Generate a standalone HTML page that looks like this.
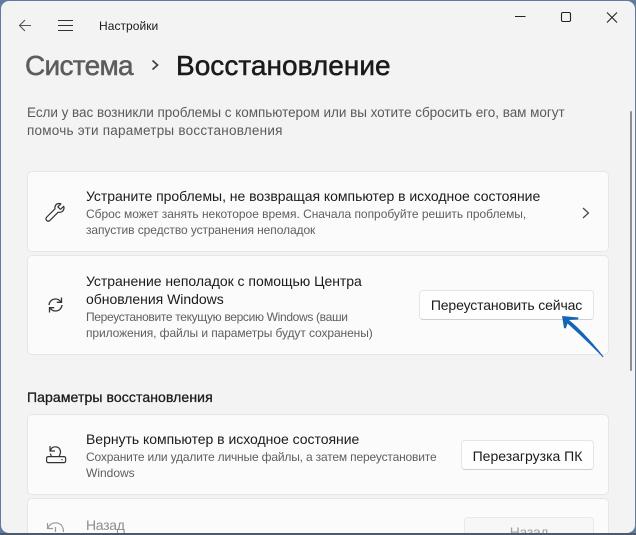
<!DOCTYPE html>
<html lang="ru"><head><meta charset="utf-8"><title>Настройки</title>
<style>
html,body{margin:0;padding:0;width:636px;height:535px;overflow:hidden;background:#5f7c9e}
body{position:relative;font-family:"Liberation Sans",sans-serif}
#bot{position:absolute;left:0;top:533px;width:636px;height:2px;background:#4d5a6e}
#win{position:absolute;left:1px;top:1px;width:634px;height:532px;background:#f3f3f3;border-radius:8px;overflow:hidden}
.t{position:absolute;white-space:nowrap;line-height:18px;color:#1b1b1b;transform-origin:0 50%}
.h{font-size:14px;letter-spacing:-.03px}
.s{font-size:12px;color:#5f5f5f;line-height:16px}
.card{position:absolute;left:26px;width:582px;background:#fbfbfb;border:1px solid #e6e6e6;border-radius:5px;box-sizing:border-box}
.btn{position:absolute;background:#fefefe;border:1px solid #e5e5e5;border-bottom-color:#d0d0d0;border-radius:4px;box-sizing:border-box;font-size:14px;color:#1b1b1b;text-align:center;white-space:nowrap}
svg{position:absolute;overflow:visible}
</style></head><body>
<div id="bot"></div>
<div id="win">
<svg style="left:0;top:0" width="634" height="532" fill="none" stroke="#3a3a3a" stroke-width="1.1">
<path d="M18 24.5H30M18.500 24.500L24 19M18.500 24.500L24 30" stroke="#555"/>
<path d="M57 19.500H72M57 24.500H72M57 29.500H72" stroke="#333"/>
<path d="M514 15.500H524.500" stroke="#222"/>
<rect x="560.500" y="11.500" width="9" height="9" rx="1.500" stroke="#222"/>
<path d="M606 11.500L616 21.500M616 11.500L606 21.500" stroke="#222"/>
<path d="M151.500 59.500L156.500 64L151.500 68.500" stroke="#444" stroke-width="1.800"/>
</svg>
<div class="t" style="left:98px;top:16px;font-size:12px;letter-spacing:.05px">Настройки</div>
<div class="t" style="left:24px;top:47px;font-size:28px;line-height:36px;color:#5c5c5c;-webkit-text-stroke:.5px #5c5c5c;letter-spacing:-.7px">Система</div>
<div class="t" style="left:175px;top:47px;font-size:28px;line-height:36px;color:#1b1b1b;-webkit-text-stroke:.5px #1b1b1b;letter-spacing:.03px">Восстановление</div>
<div class="t" style="left:26px;top:103px;font-size:13.5px;color:#5a5a5a;letter-spacing:-.03px">Если у вас возникли проблемы с компьютером или вы хотите сбросить его, вам могут</div>
<div class="t" style="left:26px;top:121px;font-size:13.5px;color:#5a5a5a;letter-spacing:.23px">помочь эти параметры восстановления</div>

<div class="card" style="top:170px;height:81px"></div>
<svg style="left:44px;top:201px" width="22" height="22" fill="none" stroke="#333" stroke-width="1.200" stroke-linejoin="round">
<path d="M14 1.500C11 1.500 9.500 4 10 6.800L1.800 15C.6 16.300 .8 17.700 1.700 18.500C2.700 19.400 4 19.300 5 18.300L13.200 10.200C16.500 11 19 8.800 19 6C19 5.300 18.900 4.800 18.700 4.300L15.500 7.300L12.800 4.800L15.900 1.800C15.300 1.600 14.700 1.500 14 1.500Z"/>
</svg>
<div class="t h" style="left:85px;top:186px">Устраните проблемы, не возвращая компьютер в исходное состояние</div>
<div class="t s" style="left:85px;top:205px;letter-spacing:-.03px">Сброс может занять некоторое время. Сначала попробуйте решить проблемы,</div>
<div class="t s" style="left:85px;top:221px;letter-spacing:-.08px">запустив средство устранения неполадок</div>
<svg style="left:580px;top:204px" width="10" height="16" fill="none" stroke="#444" stroke-width="1.200"><path d="M2 3L7.500 8L2 13"/></svg>

<div class="card" style="top:254px;height:100px"></div>
<svg style="left:46px;top:295px" width="20" height="20" fill="none" stroke="#333" stroke-width="1.300">
<path d="M2 9C2.300 5.500 5 3 8.500 3C10.800 3 12.500 4 13.800 5.800"/><path d="M14.500 1.500V6.300H9.800"/>
<path d="M15 9C14.700 12.500 12 15 8.500 15C6.200 15 4.500 14 3.200 12.200"/><path d="M2.500 16.500V11.700H7.200"/>
</svg>
<div class="t h" style="left:85px;top:271px">Устранение неполадок с помощью Центра</div>
<div class="t h" style="left:85px;top:289px">обновления Windows</div>
<div class="t s" style="left:85px;top:308px;letter-spacing:-.33px">Переустановите текущую версию Windows (ваши</div>
<div class="t s" style="left:85px;top:324px;letter-spacing:-.09px">приложения, файлы и параметры будут сохранены)</div>
<div class="btn" style="left:418px;top:289px;width:175px;height:30px;line-height:29px;letter-spacing:-.14px">Переустановить сейчас</div>
<svg style="left:0;top:0" width="634" height="532" fill="#1565b5" stroke="none">
<path d="M561 315L577.500 316.500L577 318.500L568 319C578 327 592 342 602.500 355.500L601.800 356.200C590 344 576 331 566.500 322.500L564.800 327.500L563 327Z"/>
</svg>

<div class="t" style="left:26px;top:387px;font-size:14px;color:#1b1b1b;-webkit-text-stroke:.3px #1b1b1b;letter-spacing:.1px">Параметры восстановления</div>

<div class="card" style="top:413px;height:81px"></div>
<svg style="left:45px;top:444px" width="22" height="22" fill="none" stroke="#333" stroke-width="1.200">
<rect x=".6" y="11.600" width="19" height="6" rx="1.500"/>
<path d="M4.500 5.500C5 3 7 1.800 9.500 1.800C12.500 1.800 14.500 4 14.500 7C14.500 8.500 14 9.600 13 11.500M5.500 11.500C4.800 9.800 4.500 9.200 4.300 8.500"/>
<path d="M3.500 .5V5.500H8.500" transform="translate(.5 .5)"/>
<circle cx="16" cy="14.700" r=".7" fill="#333" stroke="none"/>
</svg>
<div class="t h" style="left:85px;top:429px">Вернуть компьютер в исходное состояние</div>
<div class="t s" style="left:85px;top:448px;letter-spacing:-.17px">Сохраните или удалите личные файлы, а затем переустановите</div>
<div class="t s" style="left:85px;top:464px">Windows</div>
<div class="btn" style="left:460px;top:439px;width:133px;height:30px;line-height:30px">Перезагрузка ПК</div>

<div class="card" style="top:497px;height:60px"></div>
<svg style="left:45px;top:521px" width="22" height="14" fill="none" stroke="#9a9a9a" stroke-width="1.200">
<path d="M2 6C3 3 6 .8 9.500 .8C14 .8 17.500 4 17.500 10"/><path d="M1.500 1V6.500H7"/><path d="M9.500 5V10"/>
</svg>
<div class="t h" style="left:85px;top:515px;color:#8d8d8d;letter-spacing:-.3px">Назад</div>
<div class="btn" style="left:463px;top:516px;width:130px;height:31px;line-height:29px;color:#a0a0a0;background:#f7f7f7;border-color:#e9e9e9;letter-spacing:-.3px">Назад</div>

<div style="position:absolute;left:629px;top:110px;width:2px;height:260px;background:#8f8f8f;border-radius:1px"></div>
</div>
</body></html>
